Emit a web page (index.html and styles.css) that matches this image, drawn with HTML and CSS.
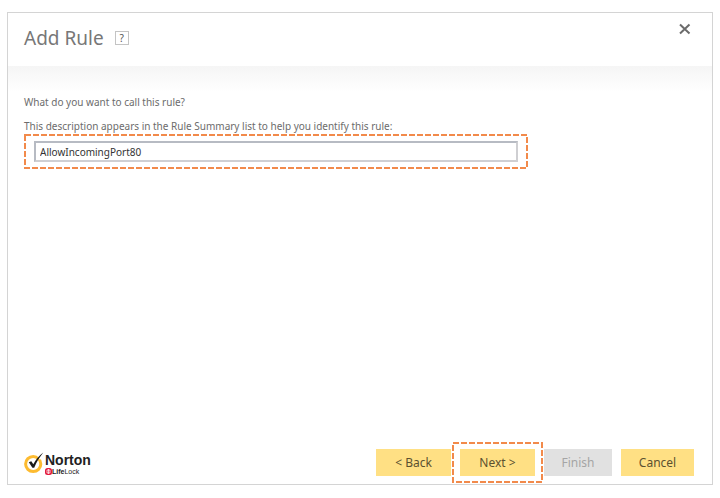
FILE: index.html
```html
<!DOCTYPE html>
<html lang="en">
<head>
<meta charset="utf-8">
<meta name="viewport" content="width=device-width, initial-scale=1">
<title>Add Rule</title>
<link rel="stylesheet" href="styles.css">
</head>
<body>
<main class="dialog">
  <header class="header">
    <h1 class="title">Add Rule</h1>
    <button class="help" type="button">?</button>
    <button class="close" type="button" aria-label="Close">
      <svg width="12" height="12" viewBox="0 0 12 12"><path d="M1 1.500 10.500 10.500M10.500 1.500 1 10.500" stroke="#6b6b6b" stroke-width="2" fill="none"/></svg>
    </button>
  </header>
  <form class="form">
    <div class="content">
      <p class="question">What do you want to call this rule?</p>
      <label class="label" for="rule-name">This description appears in the Rule Summary list to help you identify this rule:</label>
      <div class="field">
        <input class="input" id="rule-name" type="text" value="AllowIncomingPort80">
        <svg class="outline"><rect class="dashes"/></svg>
      </div>
    </div>
    <footer class="footer">
      <div class="logo">
        <svg class="mark" width="20" height="22" viewBox="0 0 20 22">
          <circle cx="9.200" cy="12" r="7.600" fill="none" stroke="#fdbb30" stroke-width="3"/>
          <path d="M13 3.500 20 0 19.500 3.500 16 8Z" fill="#fff"/>
          <path d="M4.800 10.200 7.300 9.300 9.300 12.300C12 7.500 15 3.500 19.300.5 15.800 4.800 12.500 10 10.200 15.800H8.400Z" fill="#1a1a1a"/>
        </svg>
        <div class="names">
          <span class="norton">Norton</span>
          <span class="lifelock"><svg width="7" height="7" viewBox="0 0 7 7"><rect width="7" height="7" rx="2.500" fill="#e31b3f"/><path d="M2 2h3v3H2zM3.500 1v5" fill="none" stroke="#fff" stroke-width=".7"/></svg><span><b>Life</b>Lock</span></span>
        </div>
      </div>
      <div class="actions">
        <button class="button" type="button">&lt; Back</button>
        <div class="next">
          <svg class="outline"><rect class="dashes"/></svg>
          <button class="button" type="button">Next &gt;</button>
        </div>
        <button class="button" type="button" disabled>Finish</button>
        <button class="button" type="button">Cancel</button>
      </div>
    </footer>
  </form>
</main>
</body>
</html>
```
FILE: styles.css
```css
* { box-sizing: border-box; }
body {
  margin: 0;
  min-height: 100vh;
  padding: 12px 7px 13px;
  display: flex;
  background: #fff;
  color: #6c6c6c;
  font: 10px/16px "Noto Sans", "Open Sans", sans-serif;
}
button, input { font: inherit; }
.dialog {
  flex: 1;
  display: flex;
  flex-direction: column;
  border: 1px solid #d4d4d4;
}
.header {
  display: flex;
  align-items: center;
  height: 53px;
  padding: 0 16px 4px;
  gap: 11px;
}
.title {
  margin: 0;
  font-size: 19px;
  line-height: 24px;
  font-weight: 400;
  color: #777;
}
.help {
  width: 14px;
  height: 14px;
  padding: 0;
  border: 1px solid #c4c4c4;
  background: #fff;
  color: #555;
  font-size: 10px;
  line-height: 12px;
}
.close {
  align-self: flex-start;
  margin: 10px 5px 0 auto;
  padding: 0;
  border: 0;
  background: none;
  height: 12px;
  line-height: 0;
}
.form {
  flex: 1;
  display: flex;
  flex-direction: column;
  justify-content: space-between;
  background: linear-gradient(#f5f5f5, #fff 26px);
}
.content { padding: 28px 16px 0; }
.question { margin: 0 0 8px; }
.label { display: block; }
.field {
  position: relative;
  width: 75%;
  padding: 7px 10px;
}
.input {
  display: block;
  width: 100%;
  height: 21px;
  padding: 0 4px;
  border: 2px solid #cfcfd2;
  border-top-color: #b7bbc3;
  border-left-color: #b7bbc3;
  background: #fff;
  color: #333;
}
.outline {
  position: absolute;
  inset: 0;
  width: 100%;
  height: 100%;
  pointer-events: none;
}
.dashes {
  x: 1px;
  y: 1px;
  width: calc(100% - 2px);
  height: calc(100% - 2px);
  fill: none;
  stroke: #f28a4b;
  stroke-width: 2px;
  stroke-dasharray: 6 2;
}
.footer {
  display: flex;
  justify-content: space-between;
  align-items: flex-start;
  padding: 0 18px 8px 16px;
}
.logo {
  display: flex;
  gap: 1px;
  padding-top: 3px;
}
.mark { display: block; }
.names {
  display: flex;
  flex-direction: column;
  color: #222;
}
.norton {
  font: 700 14px/16px "Liberation Sans", sans-serif;
}
.lifelock {
  display: flex;
  align-items: center;
  font: 7px/7px "Liberation Sans", sans-serif;
}
.actions {
  display: grid;
  grid-template-columns: 75px 75px 68px 73px;
  gap: 9px;
}
.button {
  position: relative;
  width: 100%;
  height: 27px;
  padding: 0;
  border: 0;
  background: #ffe084;
  color: #5c5130;
  font-size: 12px;
}
.button:disabled {
  background: #e1e1e1;
  color: #a5a5a5;
}
.next {
  position: relative;
  z-index: 1;
}
.next .outline {
  inset: -7px -8px;
  width: calc(100% + 16px);
  height: calc(100% + 14px);
  background: #fff;
}
```
